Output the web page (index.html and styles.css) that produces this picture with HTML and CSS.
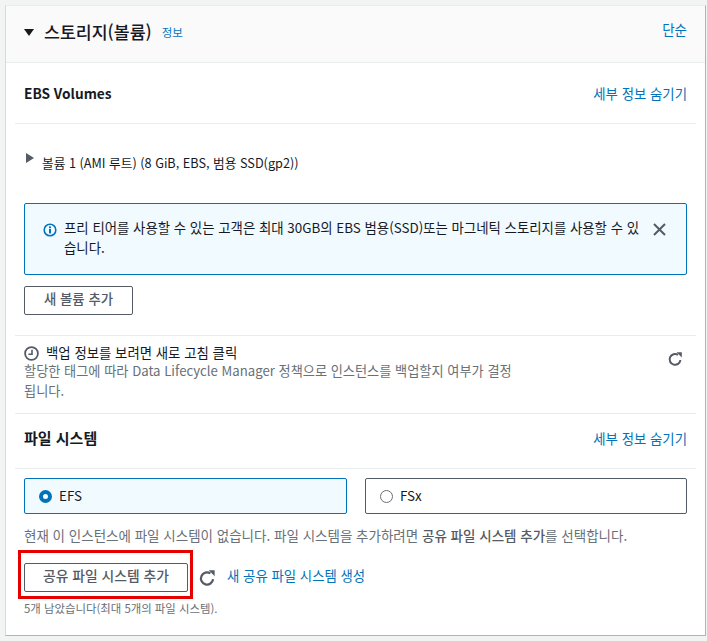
FILE: index.html
```html
<!DOCTYPE html>
<html lang="ko">
<head>
<meta charset="utf-8">
<title>스토리지(볼륨)</title>
<link rel="stylesheet" href="styles.css">
</head>
<body>
<section class="panel">
  <header class="panel-head">
    <div class="head-left">
      <svg class="caret-down" width="10" height="7" viewBox="0 0 10 7"><path d="M0 0h10L5 7z" fill="#16191f"/></svg>
      <h2 class="panel-title">스토리지(볼륨)</h2>
      <a class="link info">정보</a>
    </div>
    <a class="link simple">단순</a>
  </header>

  <div class="row-head">
    <h3 class="sub-title">EBS Volumes</h3>
    <a class="link">세부 정보 숨기기</a>
  </div>

  <div class="ebs-body">
    <div class="volume">
      <svg class="caret-right" width="8" height="10" viewBox="0 0 8 10"><path d="M0 0L8 5L0 10z" fill="#545b64"/></svg>
      <span>볼륨 1 (AMI 루트) (8 GiB, EBS, 범용 SSD(gp2))</span>
    </div>
    <div class="alert">
      <svg class="alert-icon" width="14" height="14" viewBox="0 0 14 14"><circle cx="7" cy="7" r="5.8" fill="none" stroke="#0073bb" stroke-width="1.6"/><rect x="6" y="6" width="2" height="4.4" fill="#0073bb"/><rect x="6" y="3.4" width="2" height="1.8" fill="#0073bb"/></svg>
      <p class="alert-text">프리 티어를 사용할 수 있는 고객은 최대 30GB의 EBS 범용(SSD)또는 마그네틱 스토리지를 사용할 수 있습니다.</p>
      <svg class="alert-close" width="13" height="13" viewBox="0 0 13 13"><path d="M1 1L12 12M12 1L1 12" stroke="#545b64" stroke-width="2" fill="none"/></svg>
    </div>
    <button class="btn btn-vol">새 볼륨 추가</button>
  </div>

  <div class="backup">
    <div class="backup-text">
      <div class="backup-title">
        <svg class="clock" width="15" height="15" viewBox="0 0 15 15"><circle cx="7.5" cy="7.5" r="6.4" fill="none" stroke="#545b64" stroke-width="1.8"/><path d="M8 3.8V8.3H4.4" fill="none" stroke="#545b64" stroke-width="1.6"/></svg>
        <span>백업 정보를 보려면 새로 고침 클릭</span>
      </div>
      <p class="backup-desc">할당한 태그에 따라 Data Lifecycle Manager 정책으로 인스턴스를 백업할지 여부가 결정됩니다.</p>
    </div>
    <svg class="refresh" width="16" height="16" viewBox="0 0 16 16"><path d="M13.4 9A5.4 5.4 0 1 1 11 3.9" fill="none" stroke="#545b64" stroke-width="2"/><path d="M9.6 1.2L14.8 1.2L14.8 6.4z" fill="#545b64"/></svg>
  </div>

  <div class="row-head row-fs">
    <h3 class="sub-title sub-title-fs">파일 시스템</h3>
    <a class="link">세부 정보 숨기기</a>
  </div>

  <div class="fs-body">
    <div class="tiles">
      <label class="tile tile-on"><span class="radio radio-on"></span><span class="tile-label">EFS</span></label>
      <label class="tile"><span class="radio"></span><span class="tile-label">FSx</span></label>
    </div>
    <p class="fs-note">현재 이 인스턴스에 파일 시스템이 없습니다. 파일 시스템을 추가하려면 <b>공유 파일 시스템 추가</b>를 선택합니다.</p>
    <div class="fs-actions">
      <span class="btn-wrap"><button class="btn btn-add">공유 파일 시스템 추가</button></span>
      <svg class="refresh-2" width="18" height="18" viewBox="0 0 16 16"><path d="M13.4 9A5.4 5.4 0 1 1 11 3.9" fill="none" stroke="#545b64" stroke-width="2"/><path d="M9.6 1.2L14.8 1.2L14.8 6.4z" fill="#545b64"/></svg>
      <a class="link create">새 공유 파일 시스템 생성</a>
    </div>
    <p class="fs-foot">5개 남았습니다(최대 5개의 파일 시스템).</p>
  </div>
</section>
</body>
</html>
```
FILE: styles.css
```css
* { box-sizing: border-box; }
html, body { margin: 0; padding: 0; }
body {
  width: 707px;
  height: 641px;
  background: #f2f3f3;
  padding: 5px 1px 0 5px;
  font-family: "Noto Sans CJK KR", "Noto Sans", sans-serif;
  font-size: 13.4px;
  color: #16191f;
  overflow: hidden;
}
h2, h3, p { margin: 0; }
.link { color: #0073bb; }
.panel {
  height: 631px;
  background: #fff;
  border: 1px solid #d5dbdb;
  border-top-color: #eaeded;
  border-bottom: 1px solid #aab7b8;
  border-right-color: #aab7b8;
}
.panel-head {
  height: 57px;
  background: #fafafa;
  border-bottom: 1px solid #eaeded;
  display: flex;
  align-items: center;
  justify-content: space-between;
  padding: 0 18px 4px 18px;
}
.head-left { display: flex; align-items: center; }
.panel-title { font-size: 17.3px; font-weight: 500; line-height: 20px; margin: 0 10px 0 10px; }
.info { font-size: 11.5px; }
.simple { font-size: 13.5px; margin-top: -6px; }
.row-head {
  height: 61px;
  margin: 0 9px;
  padding: 0 9px;
  border-bottom: 1px solid #eaeded;
  display: flex;
  align-items: center;
  justify-content: space-between;
}
.sub-title { font-size: 13.7px; font-weight: 700; line-height: 18px; }
.sub-title-fs { font-size: 15px; }
.ebs-body { padding: 29px 18px 20px; }
.volume { display: flex; align-items: flex-start; gap: 8px; height: 50px; line-height: 20px; font-size: 12.7px; }
.caret-right { margin-top: 0; margin-left: 2px; }
.alert {
  height: 72px;
  background: #f1faff;
  border: 1px solid #0073bb;
  border-radius: 2px;
  padding: 13px 20px 0 18px;
  display: flex;
  align-items: flex-start;
}
.alert-icon { flex: none; margin: 6px 7px 0 0; }
.alert-text { flex: 1; line-height: 20px; }
.alert-close { flex: none; margin: 6px 0 0 10px; }
.btn {
  font: inherit;
  font-weight: 500;
  color: #545b64;
  background: #fff;
  border: 1px solid #545b64;
  border-radius: 2px;
  display: block;
  padding: 0 0 5px;
}
.btn-vol { width: 109px; height: 29px; margin-top: 11px; }
.backup {
  margin: 0 9px;
  padding: 6px 13px 0 9px;
  height: 79px;
  border-top: 1px solid #eaeded;
  border-bottom: 1px solid #eaeded;
  display: flex;
  justify-content: space-between;
}
.backup-text { width: 490px; }
.backup-title { display: flex; align-items: center; gap: 7px; line-height: 20px; }
.clock { margin-top: 3px; }
.backup-desc { color: #687078; line-height: 20px; margin-top: -1px; font-size: 13.2px; }
.refresh { margin-top: 9px; }
.row-fs { height: 55px; padding-bottom: 6px; }
.fs-body { padding: 9px 18px 0; }
.tiles { display: grid; grid-template-columns: 323px 322px; column-gap: 18px; }
.tile {
  height: 36px;
  border: 1px solid #545b64;
  border-radius: 2px;
  display: flex;
  align-items: center;
  gap: 7px;
  padding: 0 14px;
}
.tile-label { margin-top: -2px; }
.tile-on { background: #f1faff; border-color: #0073bb; }
.radio { width: 13px; height: 13px; border-radius: 50%; border: 1px solid #687078; background: #fff; flex: none; }
.radio-on { border: 4px solid #0073bb; }
.fs-note { color: #687078; line-height: 20px; margin-top: 11px; font-size: 13.5px; }
.fs-note b { font-weight: 500; color: #545b64; }
.fs-actions { display: flex; align-items: center; margin-top: 18px; }
.btn-wrap { position: relative; display: block; }
.btn-wrap::after {
  content: "";
  position: absolute;
  inset: -13px -5px -7px -6px;
  border: 3px solid #e60000;
  pointer-events: none;
}
.btn-add { width: 164px; height: 29px; font-size: 13.8px; }
.refresh-2 { margin: 0 11px 0 10px; }
.create { margin-top: -6px; }
.fs-foot { font-size: 11.4px; color: #687078; line-height: 14px; margin-top: 9px; }
```
